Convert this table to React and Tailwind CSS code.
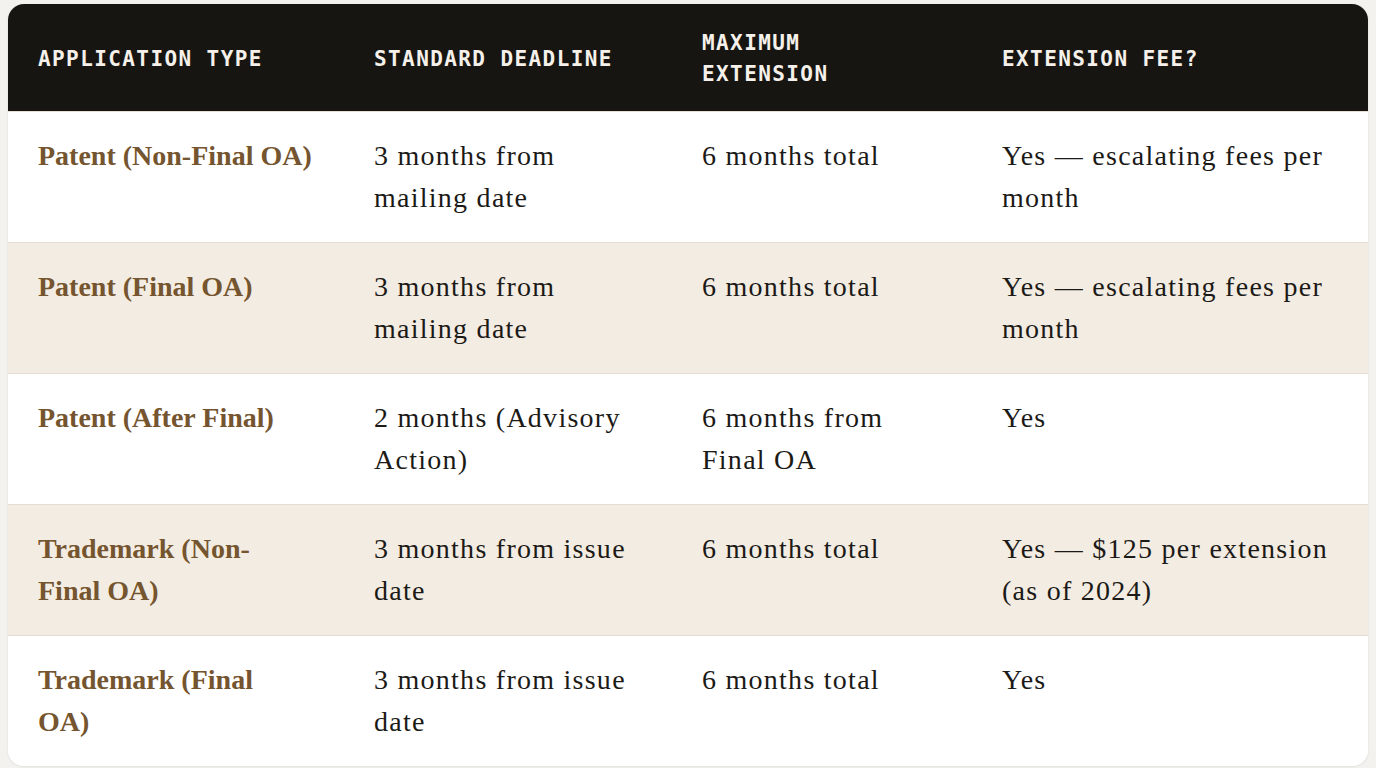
const rows = [
    {
        type: ['Patent (Non-Final OA)'],
        deadline: '3 months from mailing date',
        max: '6 months total',
        fee: 'Yes — escalating fees per month',
    },
    {
        type: ['Patent (Final OA)'],
        deadline: '3 months from mailing date',
        max: '6 months total',
        fee: 'Yes — escalating fees per month',
    },
    {
        type: ['Patent (After Final)'],
        deadline: '2 months (Advisory Action)',
        max: '6 months from Final OA',
        fee: 'Yes',
    },
    {
        type: ['Trademark (Non-', 'Final OA)'],
        deadline: '3 months from issue date',
        max: '6 months total',
        fee: 'Yes — $125 per extension (as of 2024)',
    },
    {
        type: ['Trademark (Final', 'OA)'],
        deadline: '3 months from issue date',
        max: '6 months total',
        fee: 'Yes',
    },
]

const headers = ['Application Type', 'Standard Deadline', 'Maximum Extension', 'Extension Fee?']

const App = () => {
    return (
        <div className="min-h-screen bg-[#f4f2ee] px-2 pt-1">
            <div className="rounded-2xl overflow-hidden bg-white shadow-[0_1px_3px_rgba(0,0,0,0.08)]">
                <table className="w-full table-fixed border-collapse text-left">
                    <colgroup>
                        <col className="w-[336px]" />
                        <col className="w-[328px]" />
                        <col className="w-[300px]" />
                        <col />
                    </colgroup>
                    <thead>
                        <tr className="bg-[#171512] h-[107px]">
                            {headers.map((h) => (
                                <th
                                    key={h}
                                    className="pl-[30px] pr-[40px] pt-6 pb-5 align-middle font-['DejaVu_Sans_Mono',monospace] text-[21px] leading-[31px] font-bold tracking-[0.067em] uppercase text-[#f5f1ea]"
                                >
                                    {h}
                                </th>
                            ))}
                        </tr>
                    </thead>
                    <tbody className="font-['Liberation_Serif',serif] text-[28px] leading-[42px] tracking-[0.045em] text-[#1c1a17]">
                        {rows.map((r, i) => (
                            <tr key={i} className={`h-[131px] border-t border-[#e4ddd3] ${i % 2 === 1 ? 'bg-[#f3ece2]' : 'bg-white'}`}>
                                <td className="pl-[30px] pr-[24px] py-[23px] align-top font-bold tracking-normal text-[#75552f]">
                                    {r.type.map((line, j) => (
                                        <span key={j} className="block">{line}</span>
                                    ))}
                                </td>
                                <td className="pl-[30px] pr-[24px] py-[23px] align-top">{r.deadline}</td>
                                <td className="pl-[30px] pr-[24px] py-[23px] align-top">{r.max}</td>
                                <td className="pl-[30px] pr-[24px] py-[23px] align-top">{r.fee}</td>
                            </tr>
                        ))}
                    </tbody>
                </table>
            </div>
        </div>
    )
}

export default App
